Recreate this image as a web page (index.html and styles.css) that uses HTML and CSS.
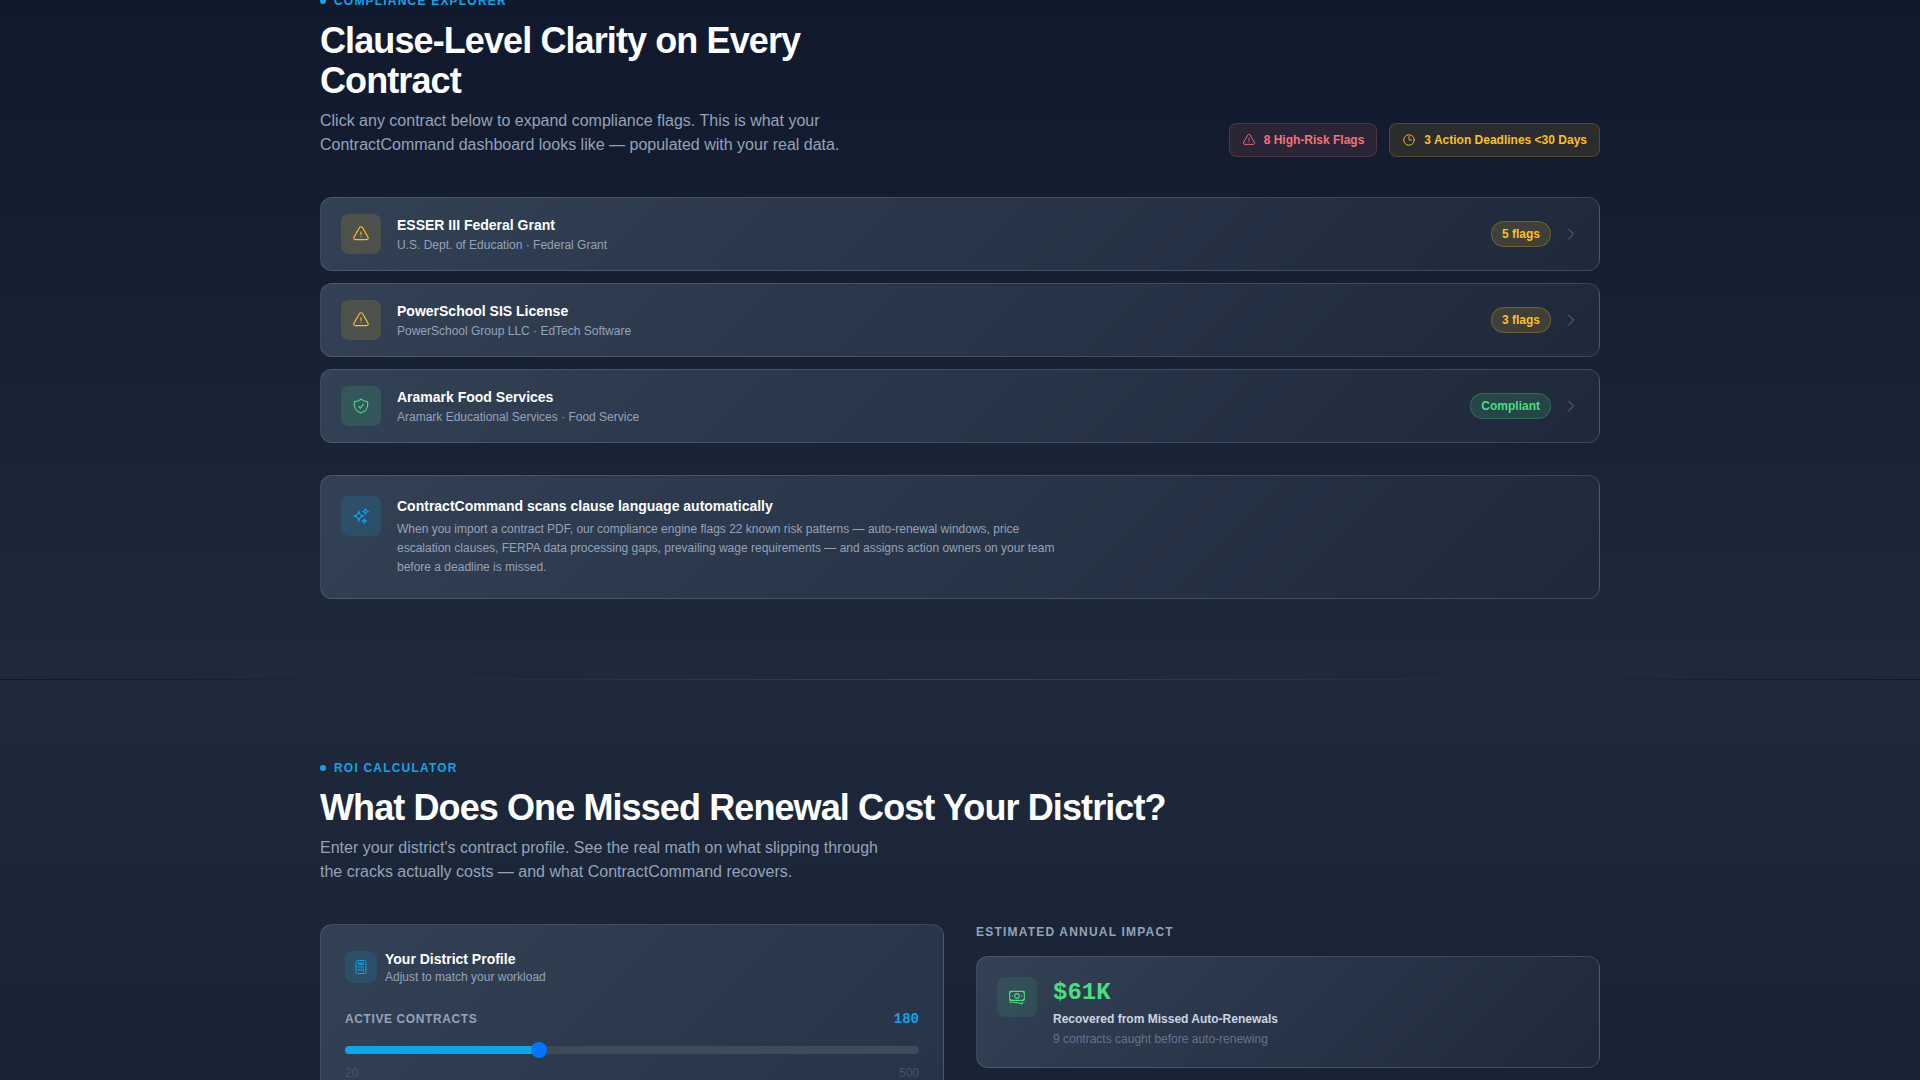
FILE: index.html
```html
<!DOCTYPE html>
<html lang="en">
  <head>
    <meta charset="UTF-8">
    <title>ContractCommand</title>
    <link rel="stylesheet" href="styles.css">
  </head>
  <body>
    <!-- Shared icons -->
    <svg class="sprite" aria-hidden="true">
      <symbol id="i-warning" viewBox="0 0 24 24">
        <path d="M12 9v3.75m-9.303 3.376c-.866 1.5.217 3.374 1.948 3.374h14.71c1.73 0 2.813-1.874 1.948-3.374L13.949 3.378c-.866-1.5-3.032-1.5-3.898 0L2.697 16.126ZM12 15.75h.007v.008H12v-.008Z" />
      </symbol>
      <symbol id="i-clock" viewBox="0 0 24 24">
        <path d="M12 6v6h4.5m4.5 0a9 9 0 1 1-18 0 9 9 0 0 1 18 0Z" />
      </symbol>
      <symbol id="i-chevron" viewBox="0 0 24 24">
        <path d="m8.25 4.5 7.5 7.5-7.5 7.5" />
      </symbol>
      <symbol id="i-shield" viewBox="0 0 24 24">
        <path d="M9 12.75 11.25 15 15 9.75m-3-7.036A11.959 11.959 0 0 1 3.598 6 11.99 11.99 0 0 0 3 9.749c0 5.592 3.824 10.29 9 11.623 5.176-1.332 9-6.03 9-11.622 0-1.31-.21-2.571-.598-3.751h-.152c-3.196 0-6.1-1.248-8.25-3.285Z" />
      </symbol>
      <symbol id="i-sparkles" viewBox="0 0 24 24">
        <path d="M9.813 15.904 9 18.75l-.813-2.846a4.5 4.5 0 0 0-3.09-3.09L2.25 12l2.846-.813a4.5 4.5 0 0 0 3.09-3.09L9 5.25l.813 2.846a4.5 4.5 0 0 0 3.09 3.09L15.75 12l-2.846.813a4.5 4.5 0 0 0-3.09 3.09ZM18.259 8.715 18 9.75l-.259-1.035a3.375 3.375 0 0 0-2.455-2.456L14.25 6l1.036-.259a3.375 3.375 0 0 0 2.455-2.456L18 2.25l.259 1.035a3.375 3.375 0 0 0 2.456 2.456L21.75 6l-1.035.259a3.375 3.375 0 0 0-2.456 2.456ZM16.894 20.567 16.5 21.75l-.394-1.183a2.25 2.25 0 0 0-1.423-1.423L13.5 18.75l1.183-.394a2.25 2.25 0 0 0 1.423-1.423l.394-1.183.394 1.183a2.25 2.25 0 0 0 1.423 1.423l1.183.394-1.183.394a2.25 2.25 0 0 0-1.423 1.423Z" />
      </symbol>
      <symbol id="i-calculator" viewBox="0 0 24 24">
        <path d="M15.75 15.75V18m-7.5-6.75h.008v.008H8.25v-.008Zm0 2.25h.008v.008H8.25V13.5Zm0 2.25h.008v.008H8.25v-.008Zm0 2.25h.008v.008H8.25V18Zm2.498-6.75h.007v.008h-.007v-.008Zm0 2.25h.007v.008h-.007V13.5Zm0 2.25h.007v.008h-.007v-.008Zm0 2.25h.007v.008h-.007V18Zm2.504-6.75h.008v.008h-.008v-.008Zm0 2.25h.008v.008h-.008V13.5Zm0 2.25h.008v.008h-.008v-.008Zm0 2.25h.008v.008h-.008V18Zm2.498-6.75h.008v.008h-.008v-.008Zm0 2.25h.008v.008h-.008V13.5ZM8.25 6h7.5v2.25h-7.5V6ZM12 2.25c-1.892 0-3.758.11-5.593.322C5.307 2.7 4.5 3.65 4.5 4.757V19.5a2.25 2.25 0 0 0 2.25 2.25h10.5a2.25 2.25 0 0 0 2.25-2.25V4.757c0-1.108-.806-2.057-1.907-2.185A48.507 48.507 0 0 0 12 2.25Z" />
      </symbol>
      <symbol id="i-banknotes" viewBox="0 0 24 24">
        <path d="M2.25 18.75a60.07 60.07 0 0 1 15.797 2.101c.727.198 1.453-.342 1.453-1.096V18.75M3.75 4.5v.75A.75.75 0 0 1 3 6h-.75m0 0v-.375c0-.621.504-1.125 1.125-1.125H20.25M2.25 6v9m18-10.5v.75c0 .414.336.75.75.75h.75m-1.5-1.5h.375c.621 0 1.125.504 1.125 1.125v9.75c0 .621-.504 1.125-1.125 1.125h-.375m1.5-1.5H21a.75.75 0 0 0-.75.75v.75m0 0H3.75m0 0h-.375a1.125 1.125 0 0 1-1.125-1.125V15m1.5 1.5v-.75A.75.75 0 0 0 3 15h-.75M15 10.5a3 3 0 1 1-6 0 3 3 0 0 1 6 0Zm3 0h.008v.008H18V10.5Zm-12 0h.008v.008H6V10.5Z" />
      </symbol>
    </svg>

    <section class="section explorer">
      <div class="container">
        <div class="section-header">
          <div class="intro">
            <div class="eyebrow">Compliance Explorer</div>
            <h2>Clause-Level Clarity on Every Contract</h2>
            <p>Click any contract below to expand compliance flags. This is what your ContractCommand dashboard looks like — populated with your real data.</p>
          </div>
          <div class="badges">
            <div class="badge red">
              <svg class="icon"><use href="#i-warning" /></svg>
              8 High-Risk Flags
            </div>
            <div class="badge amber">
              <svg class="icon"><use href="#i-clock" /></svg>
              3 Action Deadlines &lt;30 Days
            </div>
          </div>
        </div>

        <div class="contracts">
          <button class="card contract" aria-expanded="false">
            <span class="tile amber"><svg class="icon"><use href="#i-warning" /></svg></span>
            <span class="contract-text">
              <span class="card-title">ESSER III Federal Grant</span>
              <span class="contract-sub">U.S. Dept. of Education · Federal Grant</span>
            </span>
            <span class="pill amber">5 flags</span>
            <svg class="icon chevron"><use href="#i-chevron" /></svg>
          </button>
          <button class="card contract" aria-expanded="false">
            <span class="tile amber"><svg class="icon"><use href="#i-warning" /></svg></span>
            <span class="contract-text">
              <span class="card-title">PowerSchool SIS License</span>
              <span class="contract-sub">PowerSchool Group LLC · EdTech Software</span>
            </span>
            <span class="pill amber">3 flags</span>
            <svg class="icon chevron"><use href="#i-chevron" /></svg>
          </button>
          <button class="card contract" aria-expanded="false">
            <span class="tile green"><svg class="icon"><use href="#i-shield" /></svg></span>
            <span class="contract-text">
              <span class="card-title">Aramark Food Services</span>
              <span class="contract-sub">Aramark Educational Services · Food Service</span>
            </span>
            <span class="pill green">Compliant</span>
            <svg class="icon chevron"><use href="#i-chevron" /></svg>
          </button>
        </div>

        <div class="card note">
          <span class="tile blue"><svg class="icon"><use href="#i-sparkles" /></svg></span>
          <div class="note-text">
            <h3 class="card-title">ContractCommand scans clause language automatically</h3>
            <p>When you import a contract PDF, our compliance engine flags 22 known risk patterns — auto-renewal windows, price escalation clauses, FERPA data processing gaps, prevailing wage requirements — and assigns action owners on your team before a deadline is missed.</p>
          </div>
        </div>
      </div>
    </section>

    <div class="divider"></div>

    <section class="section roi">
      <div class="container">
        <div class="eyebrow">ROI Calculator</div>
        <h2>What Does One Missed Renewal Cost Your District?</h2>
        <p class="lead">Enter your district's contract profile. See the real math on what slipping through the cracks actually costs — and what ContractCommand recovers.</p>

        <div class="roi-grid">
          <div class="card profile">
            <div class="profile-head">
              <span class="tile small blue"><svg class="icon"><use href="#i-calculator" /></svg></span>
              <div>
                <h3 class="card-title">Your District Profile</h3>
                <p>Adjust to match your workload</p>
              </div>
            </div>
            <div class="field-row">
              <label for="contracts">Active Contracts</label>
              <output id="contractsValue" for="contracts">180</output>
            </div>
            <input type="range" id="contracts" min="20" max="500" value="180">
            <div class="range-ends">
              <span>20</span>
              <span>500</span>
            </div>
          </div>

          <div class="impact">
            <h3 class="impact-heading">Estimated Annual Impact</h3>
            <div class="card result">
              <span class="tile green soft"><svg class="icon"><use href="#i-banknotes" /></svg></span>
              <div>
                <div class="result-value">$61K</div>
                <div class="result-label">Recovered from Missed Auto-Renewals</div>
                <div class="result-sub">9 contracts caught before auto-renewing</div>
              </div>
            </div>
          </div>
        </div>
      </div>
    </section>

    <script>
      const range = document.getElementById("contracts");
      const value = document.getElementById("contractsValue");

      // Keep the filled part of the track in step with the thumb
      function update() {
        const pct = ((range.value - range.min) / (range.max - range.min)) * 100;
        range.style.setProperty("--fill", pct + "%");
        value.textContent = range.value;
      }

      range.addEventListener("input", update);
      update();
    </script>
  </body>
</html>
```

FILE: styles.css
```css
* {
  box-sizing: border-box;
}

body {
  margin: 0;
  height: 100vh;
  overflow: hidden;
  font-family: "Liberation Sans", Arial, sans-serif;
  font-size: 16px;
  line-height: 24px;
  background: #0f172a;
  color: white;
}

h2,
h3,
p {
  margin: 0;
}

.sprite {
  display: none;
}

.icon {
  width: 18px;
  height: 18px;
  flex-shrink: 0;
  fill: none;
  stroke: currentColor;
  stroke-width: 1.5;
  stroke-linecap: round;
  stroke-linejoin: round;
}

.section {
  padding: 80px 24px;
}

.container {
  max-width: 1280px;
  margin: 0 auto;
}

.explorer {
  margin-top: -87px;
  background: linear-gradient(180deg, #0f172a, #1e293b);
}

.roi {
  background: linear-gradient(180deg, #1e293b, #0f172a);
}

.divider {
  height: 1px;
  background: linear-gradient(90deg, transparent, rgba(14, 165, 233, 0.4), transparent);
}

.section-header {
  display: flex;
  justify-content: space-between;
  align-items: flex-end;
  margin-bottom: 40px;
}

.intro {
  max-width: 576px;
}

.eyebrow {
  display: flex;
  align-items: center;
  gap: 8px;
  margin-bottom: 12px;
  font-size: 12px;
  line-height: 16px;
  font-weight: 700;
  letter-spacing: 0.1em;
  text-transform: uppercase;
  color: #0ea5e9;
}

.eyebrow::before {
  content: "";
  width: 6px;
  height: 6px;
  border-radius: 50%;
  background: #0ea5e9;
}

h2 {
  margin-bottom: 8px;
  font-size: 36px;
  line-height: 40px;
  font-weight: 700;
  letter-spacing: -0.025em;
}

.intro p,
.lead {
  color: #94a3b8;
}

.lead {
  max-width: 576px;
}

.badges {
  display: flex;
  gap: 12px;
}

.badge {
  display: flex;
  align-items: center;
  gap: 8px;
  padding: 8px 12px;
  border: 1px solid;
  border-radius: 8px;
  font-size: 12px;
  line-height: 16px;
  font-weight: 700;
}

.badge .icon {
  width: 14px;
  height: 14px;
}

.badge.red {
  color: #f87171;
  background: rgba(248, 113, 113, 0.1);
  border-color: rgba(248, 113, 113, 0.2);
}

.badge.amber {
  color: #fbbf24;
  background: rgba(251, 191, 36, 0.1);
  border-color: rgba(251, 191, 36, 0.2);
}

.card {
  border: 1px solid rgba(148, 163, 184, 0.25);
  border-radius: 12px;
  background: linear-gradient(135deg, #334155, #1e293b);
}

.card-title {
  font-size: 14px;
  line-height: 20px;
  font-weight: 700;
  color: white;
}

.contracts {
  display: flex;
  flex-direction: column;
  gap: 12px;
}

.contract {
  display: flex;
  align-items: center;
  width: 100%;
  padding: 16px 20px;
  font-family: inherit;
  text-align: left;
  cursor: pointer;
}

.contract-text {
  display: flex;
  flex-direction: column;
  gap: 2px;
  flex: 1;
  margin-left: 16px;
}

.contract-sub {
  font-size: 12px;
  line-height: 16px;
  color: #94a3b8;
}

.tile {
  display: flex;
  align-items: center;
  justify-content: center;
  flex-shrink: 0;
  width: 40px;
  height: 40px;
  border-radius: 8px;
}

.tile.small {
  width: 32px;
  height: 32px;
}

.tile.small .icon {
  width: 16px;
  height: 16px;
}

.tile.amber {
  color: #fbbf24;
  background: rgba(251, 191, 36, 0.15);
}

.tile.green {
  color: #4ade80;
  background: rgba(74, 222, 128, 0.15);
}

.tile.green.soft {
  background: rgba(74, 222, 128, 0.1);
}

.tile.blue {
  color: #0ea5e9;
  background: rgba(14, 165, 233, 0.15);
}

.pill {
  padding: 4px 10px;
  border: 1px solid;
  border-radius: 13px;
  font-size: 12px;
  line-height: 16px;
  font-weight: 700;
}

.pill.amber {
  color: #fbbf24;
  background: rgba(251, 191, 36, 0.15);
  border-color: rgba(251, 191, 36, 0.25);
}

.pill.green {
  color: #4ade80;
  background: rgba(74, 222, 128, 0.15);
  border-color: rgba(74, 222, 128, 0.25);
}

.chevron {
  width: 16px;
  height: 16px;
  margin-left: 12px;
  color: #64748b;
}

.note {
  display: flex;
  align-items: flex-start;
  gap: 16px;
  margin-top: 32px;
  padding: 20px 20px 21px;
}

.note-text {
  max-width: 672px;
}

.note-text p {
  margin-top: 4px;
  font-size: 12px;
  line-height: 19px;
  color: #94a3b8;
}

.roi-grid {
  display: grid;
  grid-template-columns: 1fr 1fr;
  gap: 32px;
  margin-top: 40px;
}

.profile {
  min-height: 780px;
  padding: 24px;
}

.profile-head {
  display: flex;
  align-items: center;
  gap: 8px;
  margin-bottom: 24px;
}

.profile-head p {
  font-size: 12px;
  line-height: 16px;
  color: #94a3b8;
}

.field-row {
  display: flex;
  justify-content: space-between;
  align-items: center;
  line-height: 20px;
}

.field-row label {
  font-size: 12px;
  font-weight: 700;
  letter-spacing: 0.05em;
  text-transform: uppercase;
  color: #94a3b8;
}

.field-row output {
  font-family: "Liberation Mono", "Courier New", monospace;
  font-size: 14px;
  font-weight: 700;
  color: #0ea5e9;
}

input[type="range"] {
  -webkit-appearance: none;
  appearance: none;
  display: block;
  width: 100%;
  height: 8px;
  margin: 17px 0 11px;
  border-radius: 4px;
  background: linear-gradient(to right, #0ea5e9 var(--fill), #3f4a5d var(--fill));
  cursor: pointer;
}

input[type="range"]::-webkit-slider-thumb {
  -webkit-appearance: none;
  width: 16px;
  height: 16px;
  border-radius: 50%;
  background: #0075ff;
}

.range-ends {
  display: flex;
  justify-content: space-between;
  font-size: 12px;
  line-height: 16px;
  color: #475569;
}

.impact-heading {
  margin-bottom: 16px;
  font-size: 12px;
  line-height: 16px;
  font-weight: 700;
  letter-spacing: 0.1em;
  text-transform: uppercase;
  color: #94a3b8;
}

.result {
  display: flex;
  align-items: flex-start;
  gap: 16px;
  padding: 20px;
}

.result-value {
  font-family: "Liberation Mono", "Courier New", monospace;
  font-size: 24px;
  line-height: 32px;
  font-weight: 700;
  color: #4ade80;
}

.result-label {
  margin: 2px 0 4px;
  font-size: 12px;
  line-height: 16px;
  font-weight: 700;
  color: #cbd5e1;
}

.result-sub {
  font-size: 12px;
  line-height: 16px;
  color: #64748b;
}
```
